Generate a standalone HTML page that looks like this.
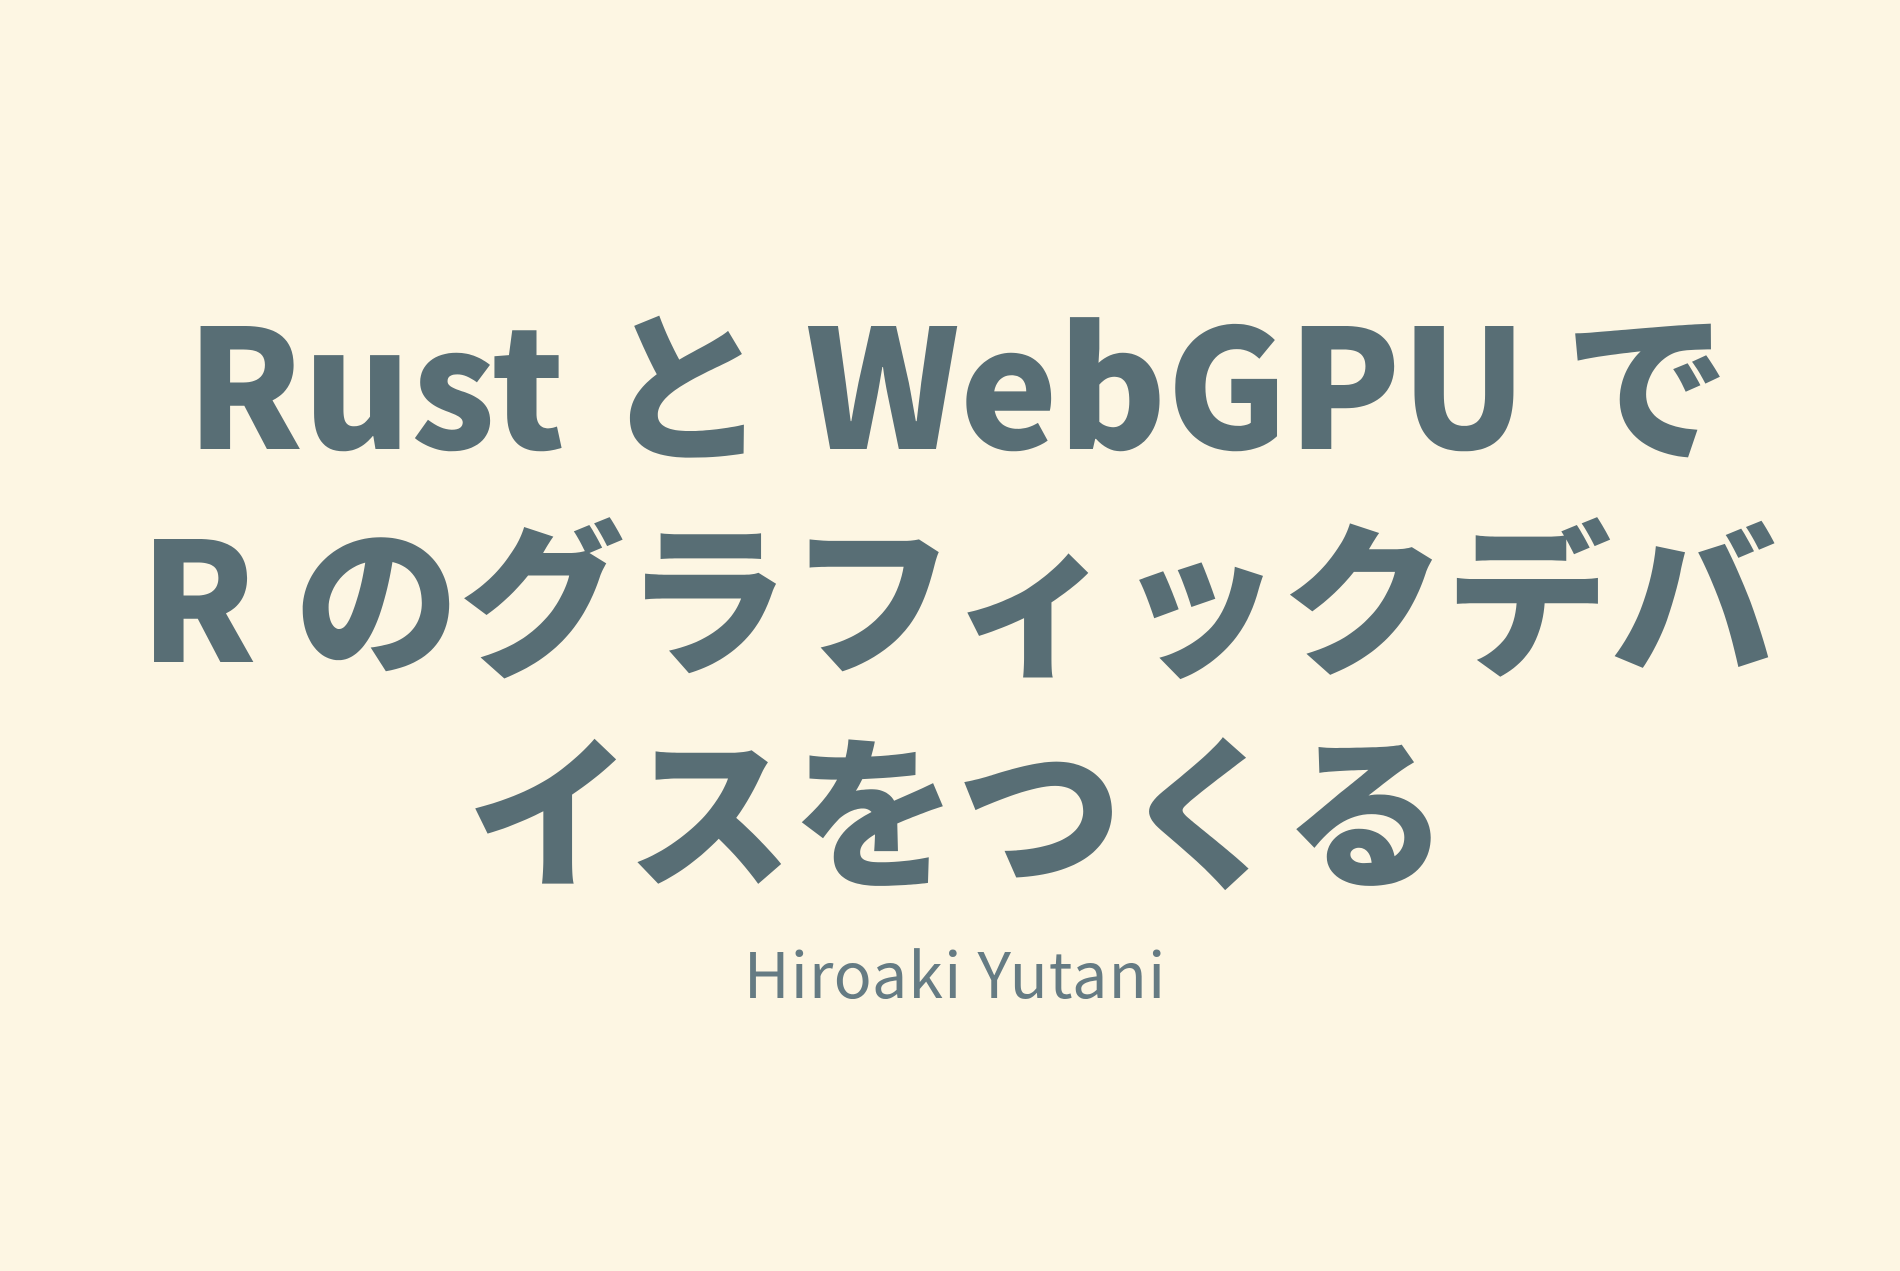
<!DOCTYPE html>
<html><head><meta charset="utf-8"><style>
html,body{margin:0;padding:0;}
body{width:1900px;height:1271px;background:#fdf6e3;overflow:hidden;position:relative;}
.t{position:absolute;width:1900px;text-align:center;white-space:nowrap;}
.title{left:8px;font-family:"Noto Sans CJK JP",sans-serif;font-weight:900;color:#586e75;font-size:165px;line-height:213px;top:271px;}
.auth{left:5px;font-family:"Noto Sans CJK JP",sans-serif;color:#657b83;font-size:63px;top:932px;line-height:80px;letter-spacing:1px;}
</style></head><body>
<div class="t title">Rust と WebGPU で<br>R のグラフィックデバ<br>イスをつくる</div>
<div class="t auth">Hiroaki Yutani</div>
</body></html>
